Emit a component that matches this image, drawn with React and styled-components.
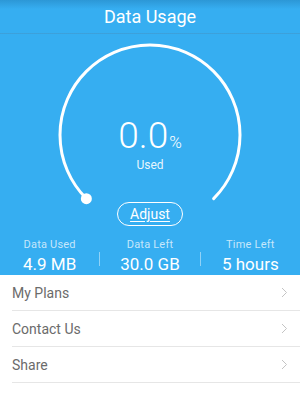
import React from "react";
import styled, { createGlobalStyle } from "styled-components";

const Global = createGlobalStyle`
  html, body { margin: 0; padding: 0; background: #ffffff; }
  body { font-family: Roboto, "Liberation Sans", Arial, sans-serif; }
  * { box-sizing: border-box; }
`;

const Page = styled.div`
  width: 300px;
  height: 400px;
  background: #ffffff;
  overflow: hidden;
`;

const Blue = styled.section`
  background: #36aef1;
  color: #ffffff;
  display: flex;
  flex-direction: column;
`;

const Header = styled.header`
  height: 34px;
  display: flex;
  align-items: center;
  justify-content: center;
  font-size: 18px;
  background: linear-gradient(#2c97d6 0px, #36aef1 9px);
  border-bottom: 1px solid rgba(255, 255, 255, 0.08);
`;

const Gauge = styled.div`
  position: relative;
  height: 194px;
  display: flex;
  flex-direction: column;
  align-items: center;
  padding-top: 84px;
`;

const Ring = styled.svg`
  position: absolute;
  top: 0;
  left: 50px;
  width: 200px;
  height: 194px;
`;

const Percent = styled.div`
  position: relative;
  height: 36px;
  font-weight: 300;
  font-size: 37px;
  line-height: 36px;
  white-space: nowrap;
`;

const Sign = styled.span`
  font-size: 17px;
  line-height: 0;
  font-weight: 300;
  margin-left: 1px;
`;

const Caption = styled.div`
  position: relative;
  margin-top: 4px;
  font-size: 12px;
  line-height: 14px;
  color: rgba(255, 255, 255, 0.9);
`;

const AdjustButton = styled.button`
  position: relative;
  margin-top: 30px;
  width: 66px;
  height: 24px;
  flex: none;
  border: 1.5px solid #ffffff;
  border-radius: 12px;
  background: transparent;
  color: #ffffff;
  font-family: Roboto, "Liberation Sans", Arial, sans-serif;
  font-size: 14px;
  line-height: 20px;
  text-decoration: underline;
  text-underline-offset: 2px;
  padding: 0;
`;

const Stats = styled.div`
  display: flex;
  align-items: center;
  padding: 10px 0 0;
  height: 47px;
`;

const Stat = styled.div`
  flex: 1;
  display: flex;
  flex-direction: column;
  align-items: center;
`;

const StatLabel = styled.div`
  font-size: 11px;
  line-height: 13px;
  letter-spacing: 0.2px;
  color: rgba(255, 255, 255, 0.72);
`;

const StatValue = styled.div`
  margin-top: 2px;
  font-size: 17px;
  line-height: 22px;
`;

const Divider = styled.div`
  width: 1px;
  height: 14px;
  background: rgba(255, 255, 255, 0.45);
  align-self: center;
  margin-top: 4px;
`;

const List = styled.ul`
  list-style: none;
  margin: 0;
  padding: 0;
`;

const Row = styled.li`
  padding-left: 12px;
`;

const RowInner = styled.div`
  height: 36px;
  display: flex;
  align-items: center;
  justify-content: space-between;
  padding-right: 12px;
  border-bottom: 1px solid #e6e6e6;
  font-size: 14px;
  color: #6b6b6b;
`;

const Chevron = () => (
  <svg width="7" height="11" viewBox="0 0 7 11">
    <path d="M1 1 L5.5 5.5 L1 10" fill="none" stroke="#c4c4c4" strokeWidth="1" />
  </svg>
);

const stats = [
  { label: "Data Used", value: "4.9 MB" },
  { label: "Data Left", value: "30.0 GB" },
  { label: "Time Left", value: "5 hours" },
];

const items = ["My Plans", "Contact Us", "Share"];

export default function App() {
  return (
    <Page>
      <Global />
      <Blue>
        <Header>Data Usage</Header>
        <Gauge>
          <Ring viewBox="0 0 200 194">
            <path
              d="M36.36 164.64 A90 90 0 1 1 163.64 164.64"
              fill="none"
              stroke="#ffffff"
              strokeWidth="3"
              strokeLinecap="round"
            />
            <circle cx="36.36" cy="164.64" r="5.5" fill="#ffffff" />
          </Ring>
          <Percent>
            0.0<Sign>%</Sign>
          </Percent>
          <Caption>Used</Caption>
          <AdjustButton>Adjust</AdjustButton>
        </Gauge>
        <Stats>
          {stats.map((s, i) => (
            <React.Fragment key={s.label}>
              {i > 0 && <Divider />}
              <Stat>
                <StatLabel>{s.label}</StatLabel>
                <StatValue>{s.value}</StatValue>
              </Stat>
            </React.Fragment>
          ))}
        </Stats>
      </Blue>
      <List>
        {items.map((t) => (
          <Row key={t}>
            <RowInner>
              {t}
              <Chevron />
            </RowInner>
          </Row>
        ))}
      </List>
    </Page>
  );
}
